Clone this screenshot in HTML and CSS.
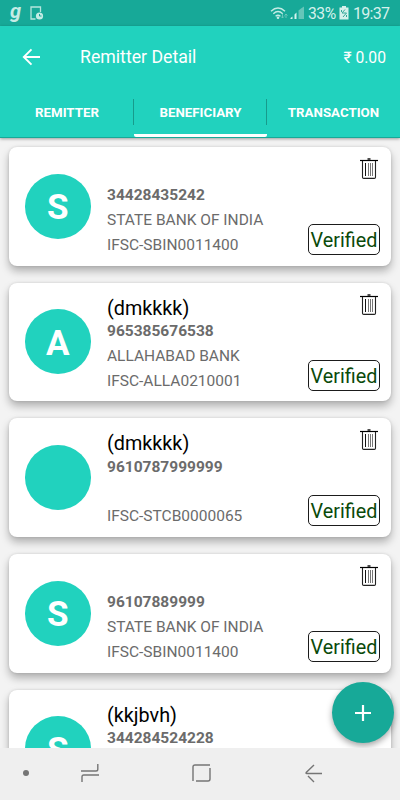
FILE: index.html
```html
<!DOCTYPE html>
<html lang="en">
<head>
<meta charset="utf-8">
<title>Remitter Detail</title>
<link rel="stylesheet" href="styles.css">
</head>
<body>
<svg width="0" height="0" class="defs">
  <symbol id="trash" viewBox="0 0 18 21">
    <path d="M7.5 1h3" stroke="#000" stroke-width="1.4"/>
    <path d="M0 2.5h18" stroke="#000" stroke-width="1.2"/>
    <path d="M2.5 3v16.2q0 1.2 1.2 1.2h10.6q1.2 0 1.2-1.2V3" fill="none" stroke="#222" stroke-width="1.1"/>
    <path d="M5.5 5v13" stroke="#111" stroke-width="1"/>
    <path d="M8.5 5v13M10.5 5v13M12.5 5v13" stroke="#777" stroke-width="1"/>
  </symbol>
</svg>
<div class="screen">
  <div class="status">
    <span class="gaana">g</span>
    <svg class="doc" width="14" height="15" viewBox="0 0 14 15"><path d="M5.5 13H1V1h9.500v5" fill="none" stroke="#b5e6dd" stroke-width="1.3"/><circle cx="9.5" cy="10" r="3.6" fill="#c5ece5"/><path d="M9.5 8v2h2" fill="none" stroke="#17a998" stroke-width="1"/></svg>
    <span class="grow"></span>
    <svg class="signals" width="36" height="16" viewBox="0 0 36 16">
      <g fill="none" stroke="#c5ece5" stroke-width="1.4"><path d="M1 5.2Q8-1.2 15 5.2M3.3 7.7q4.7-4.2 9.4 0M5.6 10.2q2.4-2 4.8 0"/></g>
      <circle cx="8" cy="11.8" r="1.3" fill="#c5ece5"/>
      <path d="M12.5 8v4m-1.500-1.500 1.500 1.500 1.500-1.500M16 12V8m-1.500 1.500L16 8l1.500 1.500" fill="none" stroke="#6fcabd" stroke-width=".9"/>
      <path d="M20.5 13v-1l2-1.500V13zM24.500 13V8.500l2-2V13z" fill="#d8f3ee"/>
      <path d="M28.5 13V4.500l2.500-2V13zM31 13V2.500l3-2V13z" fill="#66c6b9"/>
    </svg>
    <span class="pct">33%</span>
    <svg class="battery" width="10" height="14" viewBox="0 0 10 14"><path d="M3 0h4v1.500h2.500V13.500H.5V1.500H3z" fill="#d5f1ec"/><path d="M6 3.500 3 7h4.500L4 11M2.500 4v2M7.500 9v2" fill="none" stroke="#35a899" stroke-width="1"/></svg>
    <span class="clock">19:37</span>
  </div>
  <header class="header">
    <div class="bar">
      <svg class="back" width="19" height="18" viewBox="0 0 19 18"><path d="M18 9H2M9.500 1.300 1.800 9l7.700 7.700" fill="none" stroke="#fff" stroke-width="1.9"/></svg>
      <h1>Remitter Detail</h1>
      <span class="balance">₹ 0.00</span>
    </div>
    <nav class="tabs">
      <a class="tab">REMITTER</a>
      <a class="tab active">BENEFICIARY</a>
      <a class="tab">TRANSACTION</a>
    </nav>
  </header>
  <main class="list">
    <article class="card">
      <div class="avatar">S</div>
      <div class="info"><div class="name"></div><div class="num">34428435242</div><div class="line">STATE BANK OF INDIA</div><div class="line">IFSC-SBIN0011400</div></div>
      <div class="side"><svg class="trash"><use href="#trash"/></svg><span class="badge">Verified</span></div>
    </article>
    <article class="card">
      <div class="avatar">A</div>
      <div class="info"><div class="name">(dmkkkk)</div><div class="num">965385676538</div><div class="line">ALLAHABAD BANK</div><div class="line">IFSC-ALLA0210001</div></div>
      <div class="side"><svg class="trash"><use href="#trash"/></svg><span class="badge">Verified</span></div>
    </article>
    <article class="card">
      <div class="avatar"></div>
      <div class="info"><div class="name">(dmkkkk)</div><div class="num">9610787999999</div><div class="line"></div><div class="line">IFSC-STCB0000065</div></div>
      <div class="side"><svg class="trash"><use href="#trash"/></svg><span class="badge">Verified</span></div>
    </article>
    <article class="card">
      <div class="avatar">S</div>
      <div class="info"><div class="name"></div><div class="num">96107889999</div><div class="line">STATE BANK OF INDIA</div><div class="line">IFSC-SBIN0011400</div></div>
      <div class="side"><svg class="trash"><use href="#trash"/></svg><span class="badge">Verified</span></div>
    </article>
    <article class="card">
      <div class="avatar">S</div>
      <div class="info"><div class="name">(kkjbvh)</div><div class="num">344284524228</div></div>
    </article>
  </main>
  <div class="fab"><svg width="16" height="16" viewBox="0 0 16 16"><path d="M8 0v16M0 8h16" stroke="#fff" stroke-width="2.2"/></svg></div>
  <footer class="sysnav">
    <i class="dot"></i>
    <svg class="recent" width="18" height="20" viewBox="0 0 18 20"><path d="M0 8h15q1.800 0 1.800-1.800V1M18 12H2.800Q1 12 1 13.800V19" fill="none" stroke="#757575" stroke-width="1.4"/></svg>
    <svg class="home" width="19" height="18" viewBox="0 0 19 18"><path d="M18 1H3Q1 1 1 3v14M18 4v11q0 2-2 2H4" fill="none" stroke="#757575" stroke-width="1.4"/></svg>
    <svg class="navback" width="18" height="19" viewBox="0 0 18 19"><path d="M9 1 1.200 8.500q-.6 1 .5 1H17M3 12l6 6" fill="none" stroke="#757575" stroke-width="1.4"/></svg>
  </footer>
</div>
</body>
</html>
```
FILE: styles.css
```css
* { box-sizing: border-box; }
body { margin: 0; font-family: Roboto, "Liberation Sans", sans-serif; }
.defs { position: absolute; }
.screen { position: relative; width: 400px; height: 800px; overflow: hidden; display: flex; flex-direction: column; background: #f3f3f3; }
.status { flex: none; height: 26px; background: #17a998; display: flex; align-items: center; color: #d5f1ec; padding: 0 9px 0 10px; }
.gaana { width: 20px; font: italic bold 20px/24px Roboto, sans-serif; margin-top: -4px; color: #c5ece5; }
.grow { flex: 1; }
.signals { margin-right: 2px; margin-top: 6px; align-self: flex-start; }
.pct { font-size: 15.7px; width: 31px; white-space: nowrap; letter-spacing: -.5px; }
.battery { margin-right: 4px; }
.clock { font-size: 16px; width: 38px; letter-spacing: -.7px; white-space: nowrap; }
.header { flex: none; height: 112px; background: #21d2be; border-bottom: 1px solid #17a998; box-shadow: 0 1px 3px rgba(0,0,0,.35); z-index: 1; color: #fff; display: flex; flex-direction: column; }
.bar { height: 61px; display: flex; align-items: center; padding: 0 14px 0 22px; }
h1 { margin: 0 0 0 39px; font-weight: 400; font-size: 17.7px; flex: 1; }
.balance { font-size: 15.7px; padding-top: 1px; }
.tabs { flex: 1; display: grid; grid-template-columns: 134px 133px 133px; }
.tab { display: flex; align-items: center; justify-content: center; font-weight: 700; font-size: 13.3px; padding-top: 4px; border-bottom: 3px solid transparent; background: linear-gradient(#179b8c, #179b8c) right 12px / 1px 26px no-repeat; }
.tab:last-child { background: none; }
.active { border-bottom-color: #fff; border-radius: 0 0 2px 2px; }
.list { flex: 1; min-height: 0; overflow: hidden; padding: 9px 9px 0; display: flex; flex-direction: column; gap: 17.2px; }
.card { flex: none; height: 118.5px; background: #fff; border-radius: 8px; box-shadow: 0 5px 9px rgba(0,0,0,.28), 0 0 3px rgba(0,0,0,.12); display: flex; padding: 0 11px 0 15.5px; }
.avatar { width: 66.5px; height: 65px; margin-top: 26.5px; border-radius: 50%; background: #21d2be; color: #fff; font-weight: 700; font-size: 35px; display: flex; align-items: center; justify-content: center; padding-top: 3px; }
.info { flex: 1; margin-left: 16px; padding-top: 13px; white-space: nowrap; color: #6b6b6b; }
.name { height: 24.4px; line-height: 25.6px; font-size: 19.8px; color: #000; }
.num { height: 24px; line-height: 22px; font-size: 15.5px; font-weight: 700; }
.line { height: 24.7px; line-height: 24.7px; font-size: 15.5px; }
.side { display: flex; flex-direction: column; align-items: flex-end; justify-content: space-between; padding: 11px 0 10.5px; }
.trash { width: 18px; height: 21px; margin-right: 2px; }
.badge { width: 72px; height: 31px; border: 1px solid #1b1b1b; border-radius: 5px; color: #0a4a0a; font-size: 19.8px; line-height: 31px; text-align: center; }
.fab { position: absolute; left: 332px; top: 682px; width: 62px; height: 61px; border-radius: 50%; background: #17a998; box-shadow: 0 3px 6px rgba(0,0,0,.35); display: flex; align-items: center; justify-content: center; }
.sysnav { flex: none; height: 52px; background: #efefef; z-index: 2; display: flex; align-items: center; padding: 0 0 2px 23px; }
.dot { width: 6px; height: 6px; border-radius: 50%; background: #757575; }
.recent { margin-left: 52px; }
.home { margin-left: 93px; }
.navback { margin-left: 94px; }
```
